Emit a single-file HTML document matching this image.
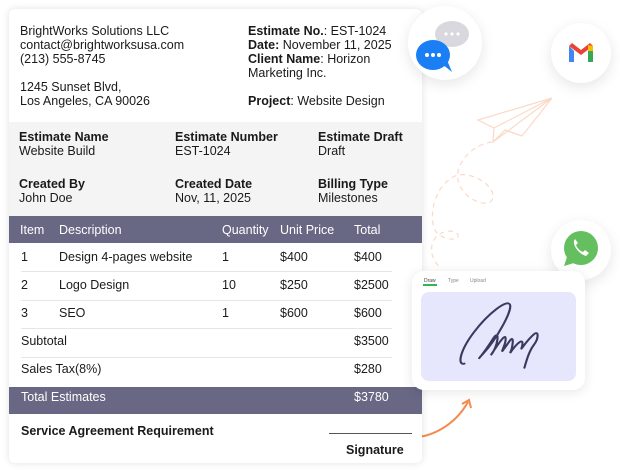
<!DOCTYPE html>
<html><head><style>
*{margin:0;padding:0;box-sizing:border-box}
body{width:620px;height:470px;background:#fff;font-family:"Liberation Sans",sans-serif;color:#1a1a1a;position:relative;overflow:hidden}
.card{position:absolute;left:9px;top:9px;width:413px;height:454px;background:#fff;border-radius:6px;box-shadow:0 0 8px rgba(0,0,0,.12);overflow:hidden}
.t{position:absolute;font-size:12.5px;line-height:14px;white-space:nowrap}
b{font-weight:bold}
.gray{position:absolute;left:0;top:113px;width:413px;height:94px;background:#f4f4f4}
.ph{position:absolute;left:0;width:413px;height:27px;background:#686784}
.w{color:#fff}
.ln{position:absolute;left:12px;width:371px;height:1px;background:#e6e6e6}
.circ{position:absolute;border-radius:50%;background:#fff;box-shadow:0 4px 14px rgba(0,0,0,.1)}
</style></head><body>
<svg style="position:absolute;left:0;top:0" width="620" height="470">
<g fill="none" stroke="#fbd9c6" stroke-width="1.2">
<path d="M552 98 L478 120 L494 128 L493 142 Z M552 98 L494 128 M552 98 L522 136 L505 130 L493 142"/>
<path d="M492 142 C470 145 455 165 458 180 C462 200 490 210 493 198 C495 185 470 170 455 176 C435 185 428 215 435 230 C440 240 460 242 458 235 C455 228 435 230 432 245 C430 255 435 262 440 268" stroke-dasharray="5 4"/>
</g>
<path d="M405 437 C430 440 455 425 468 402" fill="none" stroke="#f58a4b" stroke-width="2"/>
<path d="M462 404 L469 400 L471 408" fill="none" stroke="#f58a4b" stroke-width="2"/>
</svg>
<div class="card">
<div class="t" style="left:11px;top:15px">BrightWorks Solutions LLC<br>contact@brightworksusa.com<br>(213) 555-8745</div>
<div class="t" style="left:11px;top:71px">1245 Sunset Blvd,<br>Los Angeles, CA 90026</div>
<div class="t" style="left:239px;top:15px"><b>Estimate No.</b>: EST-1024<br><b>Date:</b> November 11, 2025<br><b>Client Name</b>: Horizon<br>Marketing Inc.</div>
<div class="t" style="left:239px;top:85px"><b>Project</b>: Website Design</div>
<div class="gray"></div>
<div class="t" style="left:10px;top:121px"><b>Estimate Name</b><br>Website Build</div>
<div class="t" style="left:166px;top:121px"><b>Estimate Number</b><br>EST-1024</div>
<div class="t" style="left:309px;top:121px"><b>Estimate Draft</b><br>Draft</div>
<div class="t" style="left:10px;top:168px"><b>Created By</b><br>John Doe</div>
<div class="t" style="left:166px;top:168px"><b>Created Date</b><br>Nov, 11, 2025</div>
<div class="t" style="left:309px;top:168px"><b>Billing Type</b><br>Milestones</div>
<div class="ph" style="top:207px"></div>
<div class="t w" style="left:11px;top:214px">Item</div><div class="t w" style="left:50px;top:214px">Description</div><div class="t w" style="left:213px;top:214px">Quantity</div><div class="t w" style="left:271px;top:214px">Unit Price</div><div class="t w" style="left:345px;top:214px">Total</div>
<div class="t" style="left:12px;top:241px">1</div><div class="t" style="left:50px;top:241px">Design 4-pages website</div><div class="t" style="left:213px;top:241px">1</div><div class="t" style="left:271px;top:241px">$400</div><div class="t" style="left:345px;top:241px">$400</div>
<div class="ln" style="top:262px"></div>
<div class="t" style="left:12px;top:269px">2</div><div class="t" style="left:50px;top:269px">Logo Design</div><div class="t" style="left:213px;top:269px">10</div><div class="t" style="left:271px;top:269px">$250</div><div class="t" style="left:345px;top:269px">$2500</div>
<div class="ln" style="top:291px"></div>
<div class="t" style="left:12px;top:297px">3</div><div class="t" style="left:50px;top:297px">SEO</div><div class="t" style="left:213px;top:297px">1</div><div class="t" style="left:271px;top:297px">$600</div><div class="t" style="left:345px;top:297px">$600</div>
<div class="ln" style="top:319px"></div>
<div class="t" style="left:12px;top:325px">Subtotal</div><div class="t" style="left:345px;top:325px">$3500</div>
<div class="ln" style="top:348px"></div>
<div class="t" style="left:12px;top:353px">Sales Tax(8%)</div><div class="t" style="left:345px;top:353px">$280</div>
<div class="ph" style="top:378px"></div>
<div class="t w" style="left:12px;top:381px">Total Estimates</div><div class="t w" style="left:345px;top:381px">$3780</div>
<div class="t" style="left:12px;top:415px"><b>Service Agreement Requirement</b></div>
<div style="position:absolute;left:320px;top:424px;width:83px;height:1px;background:#555"></div>
<div class="t" style="left:337px;top:434px"><b>Signature</b></div>
</div>
<div class="circ" style="left:408px;top:6px;width:74px;height:74px"></div>
<svg style="position:absolute;left:414px;top:20px" width="60" height="60">
<ellipse cx="38" cy="14" rx="17" ry="13" fill="#d8d8de"/>
<circle cx="32" cy="14" r="1.6" fill="#fff"/><circle cx="38" cy="14" r="1.6" fill="#fff"/><circle cx="44" cy="14" r="1.6" fill="#fff"/>
<ellipse cx="19" cy="35" rx="17" ry="15" fill="#1a7ff5"/>
<path d="M28 44 L38 52 L33 40 Z" fill="#1a7ff5"/>
<circle cx="13" cy="35" r="2" fill="#fff"/><circle cx="19" cy="35" r="2" fill="#fff"/><circle cx="25" cy="35" r="2" fill="#fff"/>
</svg>
<div class="circ" style="left:551px;top:23px;width:60px;height:60px"></div>
<svg style="position:absolute;left:567px;top:42px" width="28" height="22">
<path d="M2 4 V20 H7 V9 Z" fill="#4285f4"/><path d="M21 9 V20 H26 V4 Z" fill="#34a853"/>
<path d="M2 4 L14 13 L26 4 L23 1 L14 8 L5 1 Z" fill="#ea4335"/><path d="M21 3 L26 4 V9 L21 9Z" fill="#fbbc04"/>
</svg>
<div class="circ" style="left:551px;top:220px;width:60px;height:60px"></div>
<svg style="position:absolute;left:561px;top:230px" width="40" height="40">
<circle cx="20" cy="18" r="17" fill="#65bf5f"/><path d="M6 27 L3 36 L13 33 Z" fill="#65bf5f"/>
<path d="M13 11 C12 16 18 24 25 26 L28 23 L24 20 L22 22 C19 21 16 18 15 15 L17 13 L14 9 Z" fill="#fff"/>
</svg>
<div style="position:absolute;left:412px;top:271px;width:173px;height:119px;background:#fff;border-radius:12px;box-shadow:0 2px 12px rgba(0,0,0,.1)"></div>
<div style="position:absolute;left:424px;top:278px;font-size:5px;color:#444">Draw</div>
<div style="position:absolute;left:448px;top:278px;font-size:5px;color:#888">Type</div>
<div style="position:absolute;left:470px;top:278px;font-size:5px;color:#888">Upload</div>
<div style="position:absolute;left:423px;top:284px;width:14px;height:2px;background:#34b554"></div>
<div style="position:absolute;left:421px;top:292px;width:155px;height:89px;background:#e6e6fc;border-radius:8px"></div>
<svg style="position:absolute;left:421px;top:292px" width="155" height="89">
<g transform="translate(-7,-4) scale(1.2,1.05)">
<path d="M42 72 C36 74 38 60 50 42 C62 24 78 10 80 16 C82 22 68 50 58 62 C50 72 56 66 66 48 C72 38 70 56 64 64 C72 50 78 40 76 52 C74 60 70 66 80 50 C84 44 82 58 80 62 C86 52 92 46 90 56 C88 62 92 52 100 44 C104 40 104 48 100 54 C96 60 94 68 92 76" fill="none" stroke="#3a3a60" stroke-width="1.8" stroke-linecap="round"/>
</g>
</svg>
</body></html>
